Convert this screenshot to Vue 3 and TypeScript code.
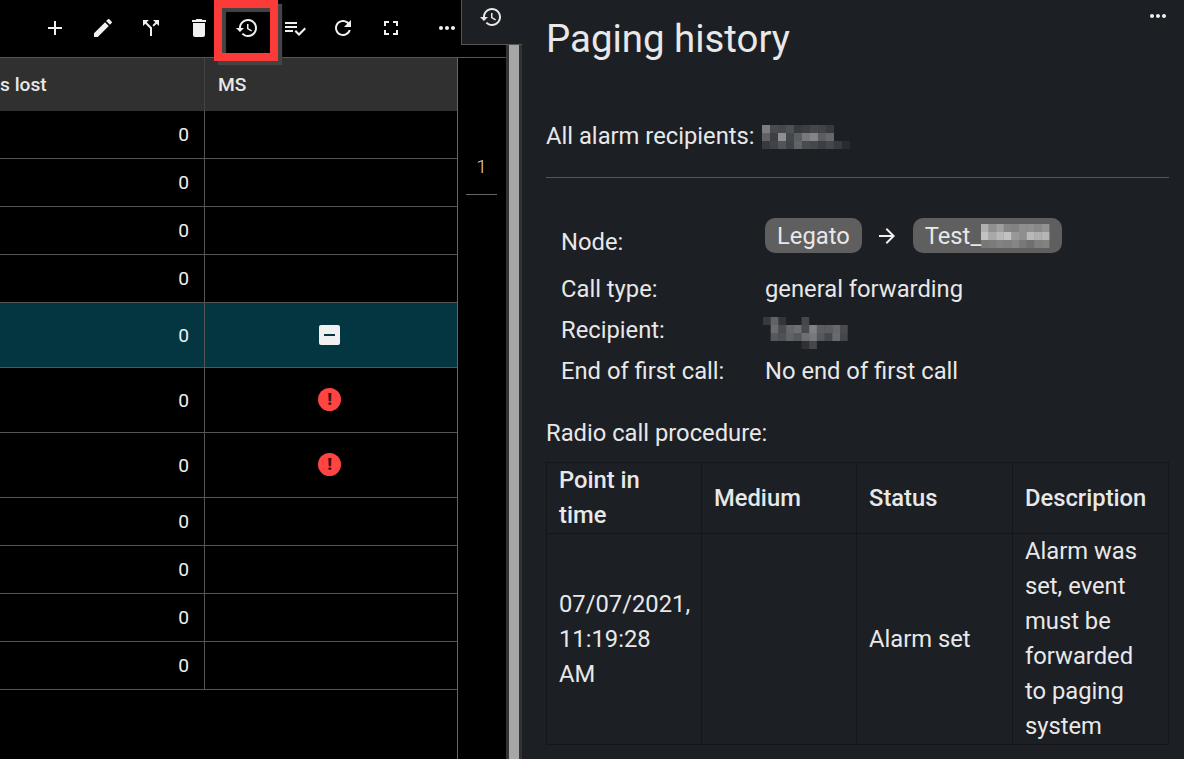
<script setup lang="ts">
const icons: Record<string, string> = {
  add: 'M19 13h-6v6h-2v-6H5v-2h6V5h2v6h6v2z',
  edit: 'M3 17.25V21h3.75L17.81 9.94l-3.75-3.75L3 17.25zM20.71 7.04c.39-.39.39-1.02 0-1.41l-2.34-2.34c-.39-.39-1.02-.39-1.41 0l-1.83 1.83 3.75 3.75 1.83-1.83z',
  split: 'M14 4l2.29 2.29-2.88 2.88 1.42 1.42 2.88-2.88L20 10V4zm-4 0H4v6l2.29-2.29 4.71 4.7V20h2v-8.41l-5.29-5.3z',
  trash: 'M6 19c0 1.1.9 2 2 2h8c1.1 0 2-.9 2-2V7H6v12zM19 4h-3.5l-1-1h-5l-1 1H5v2h14V4z',
  history: 'M13 3c-4.97 0-9 4.03-9 9H1l3.89 3.89.07.14L9 12H6c0-3.87 3.13-7 7-7s7 3.13 7 7-3.13 7-7 7c-1.93 0-3.68-.79-4.94-2.06l-1.42 1.42C8.27 19.99 10.51 21 13 21c4.97 0 9-4.03 9-9s-4.03-9-9-9zm-1 5v5l4.28 2.54.72-1.21-3.5-2.08V8H12z',
  checklist: 'M14 10H2v2h12v-2zm0-4H2v2h12V6zM2 16h8v-2H2v2zm19.5-4.5L23 13l-6.99 7-4.51-4.5L13 14l3.01 3 5.49-5.5z',
  refresh: 'M17.65 6.35C16.2 4.9 14.21 4 12 4c-4.42 0-7.99 3.58-7.99 8s3.57 8 7.99 8c3.73 0 6.84-2.55 7.73-6h-2.08c-.82 2.33-3.04 4-5.65 4-3.31 0-6-2.69-6-6s2.69-6 6-6c1.66 0 3.14.69 4.22 1.78L13 11h7V4l-2.35 2.35z',
  fullscreen: 'M7 14H5v5h5v-2H7v-3zm-2-4h2V7h3V5H5v5zm12 7h-3v2h5v-5h-2v3zM14 5v2h3v3h2V5h-5z',
  more: 'M6 10c-1.1 0-2 .9-2 2s.9 2 2 2 2-.9 2-2-.9-2-2-2zm12 0c-1.1 0-2 .9-2 2s.9 2 2 2 2-.9 2-2-.9-2-2-2zm-6 0c-1.1 0-2 .9-2 2s.9 2 2 2 2-.9 2-2-.9-2-2-2z',
  arrow: 'M12 4l-1.41 1.41L16.17 11H4v2h12.17l-5.58 5.59L12 20l8-8z',
};

const tools = ['add', 'edit', 'split', 'trash', 'history', 'checklist', 'refresh', 'fullscreen'];

const rows = [
  { h: 48 }, { h: 48 }, { h: 48 }, { h: 48 },
  { h: 65, state: 'minus' }, { h: 65, state: 'error' }, { h: 65, state: 'error' },
  { h: 48 }, { h: 48 }, { h: 48 }, { h: 48 },
];

// blurred-out names, values are white opacity per block
const blurAll = [
  [42, 20, 18, 22, 12, 14, 18, 16, 12, 0, 0],
  [30, 14, 50, 18, 28, 40, 45, 28, 32, 0, 0],
  [12, 16, 24, 16, 30, 20, 18, 14, 18, 12, 6],
];
const blurTest = [
  [50, 30, 40, 24, 22, 30, 30, 26, 32],
  [62, 46, 56, 62, 36, 30, 56, 50, 54],
  [16, 18, 22, 20, 24, 16, 10, 20, 22],
];
const blurRecipient = [
  [12, 30, 10, 0, 0, 18, 0, 0, 0, 0, 0],
  [0, 34, 20, 32, 36, 20, 44, 28, 28, 32, 20],
  [0, 26, 22, 30, 26, 36, 40, 26, 18, 34, 18],
  [0, 0, 0, 0, 0, 8, 18, 0, 0, 0, 0],
];

function flat(grid: number[][]) {
  return grid.flatMap((row, y) => row.map((v, x) => ({ x, y, o: v / 100 })));
}
</script>

<template>
  <div class="page">
    <section class="left">
      <div class="toolbar">
        <button v-for="t in tools" :key="t">
          <svg viewBox="0 0 24 24"><path :d="icons[t]" /></svg>
        </button>
        <button class="more">
          <svg viewBox="0 0 24 24"><path :d="icons.more" /></svg>
        </button>
      </div>
      <div class="highlight"></div>

      <div class="body">
        <div class="grid">
          <div class="head">
            <div class="col-a">s lost</div>
            <div class="col-b">MS</div>
          </div>
          <div
            v-for="(row, i) in rows"
            :key="i"
            class="row"
            :class="{ selected: row.state === 'minus' }"
            :style="{ height: row.h + 'px' }"
          >
            <div class="col-a num">0</div>
            <div class="col-b state">
              <span v-if="row.state === 'minus'" class="minus"><i></i></span>
              <span v-if="row.state === 'error'" class="error">!</span>
            </div>
          </div>
        </div>
        <div class="pager">
          <div class="page-no">1</div>
        </div>
      </div>

      <div class="tab">
        <svg viewBox="0 0 24 24"><path :d="icons.history" /></svg>
      </div>
    </section>

    <div class="splitter"><div class="handle"></div></div>

    <section class="panel">
      <svg class="panel-more" viewBox="0 0 24 24"><path :d="icons.more" /></svg>
      <h1>Paging history</h1>
      <div class="recipients">
        <span>All alarm recipients:</span>
        <svg class="blur blur-all" width="89" height="24">
          <rect v-for="c in flat(blurAll)" :key="`${c.x}-${c.y}`" :x="c.x * 8" :y="c.y * 8" width="8" height="8" fill="#fff" :fill-opacity="c.o" />
        </svg>
      </div>
      <hr />
      <div class="info">
        <div class="label">Node:</div>
        <div class="chips">
          <span class="chip">Legato</span>
          <svg class="arrow" viewBox="0 0 24 24"><path :d="icons.arrow" /></svg>
          <span class="chip">Test_<svg class="blur" width="69" height="24">
            <rect v-for="c in flat(blurTest)" :key="`${c.x}-${c.y}`" :x="c.x * 7.6" :y="c.y * 8" width="7.6" height="8" fill="#fff" :fill-opacity="c.o" />
          </svg></span>
        </div>
        <div class="label">Call type:</div>
        <div>general forwarding</div>
        <div class="label">Recipient:</div>
        <div class="recipient-cell">
          <svg class="blur" width="86" height="32">
            <rect v-for="c in flat(blurRecipient)" :key="`${c.x}-${c.y}`" :x="c.x * 7.7" :y="c.y * 8" width="7.7" height="8" fill="#fff" :fill-opacity="c.o" />
          </svg>
        </div>
        <div class="label">End of first call:</div>
        <div>No end of first call</div>
      </div>
      <div class="procedure">Radio call procedure:</div>
      <table>
        <colgroup>
          <col class="w155" />
          <col class="w155" />
          <col class="w156" />
          <col class="w156" />
        </colgroup>
        <thead>
          <tr>
            <th>Point in time</th>
            <th>Medium</th>
            <th>Status</th>
            <th>Description</th>
          </tr>
        </thead>
        <tbody>
          <tr>
            <td>07/07/2021, 11:19:28 AM</td>
            <td></td>
            <td>Alarm set</td>
            <td>Alarm was set, event must be forwarded to paging system</td>
          </tr>
        </tbody>
      </table>
    </section>
  </div>
</template>

<style>
html,
body {
  margin: 0;
  background: #000;
  overflow: hidden;
}
</style>

<style scoped>
.page {
  display: flex;
  width: 1184px;
  height: 759px;
  overflow: hidden;
  font-family: Roboto, "Noto Sans", sans-serif;
  color: #e8e8e8;
  background: #000;
}
.left {
  position: relative;
  width: 506px;
  flex: none;
  display: flex;
  flex-direction: column;
}
.toolbar {
  display: flex;
  align-items: center;
  flex: none;
  height: 55px;
  padding-left: 31px;
  padding-bottom: 2px;
  border-bottom: 1px solid #555;
}
.toolbar button {
  width: 48px;
  height: 48px;
  padding: 0;
  border: none;
  background: transparent;
  display: flex;
  align-items: center;
  justify-content: center;
}
.toolbar svg {
  width: 24px;
  height: 24px;
  fill: #f0f0f0;
}
.toolbar .more {
  margin-left: 8px;
}
.highlight {
  position: absolute;
  left: 214px;
  top: 0;
  width: 48px;
  height: 45px;
  border: 8px solid #fb3a3a;
  box-shadow: 4px 4px 1px #444, inset 4px 4px 1px #444;
}
.body {
  flex: 1;
  display: flex;
  min-height: 0;
}
.grid {
  width: 458px;
  flex: none;
  border-right: 1px solid #666;
  box-sizing: border-box;
}
.head {
  display: flex;
  height: 53px;
  background: #303030;
  font-size: 19.2px;
  font-weight: 500;
  color: #e8e8e8;
  line-height: 53px;
}
.head .col-a {
  border-right: 1px solid #444;
}
.head .col-b {
  padding-left: 13px;
}
.row {
  display: flex;
  box-sizing: border-box;
  border-bottom: 1px solid #555;
}
.col-a {
  width: 205px;
  flex: none;
  box-sizing: border-box;
}
.col-b {
  flex: 1;
}
.row .col-a {
  border-right: 1px solid #555;
}
.num {
  display: flex;
  align-items: center;
  justify-content: flex-end;
  padding-right: 15px;
  font-size: 19.2px;
  font-weight: 400;
  color: #f0f0f0;
}
.state {
  display: flex;
  align-items: center;
  justify-content: center;
  padding-right: 3px;
}
.selected {
  background: #033641;
}
.minus {
  width: 21px;
  height: 20px;
  border-radius: 2px;
  background: #f0f0f0;
  display: flex;
  align-items: center;
  justify-content: center;
}
.minus i {
  display: block;
  width: 11px;
  height: 2px;
  background: #033641;
}
.error {
  width: 23px;
  height: 23px;
  margin-bottom: 2px;
  border-radius: 50%;
  background: #ff4444;
  color: #3a0a0c;
  font-size: 17px;
  font-weight: 900;
  line-height: 23px;
  text-align: center;
}
.pager {
  flex: 1;
  padding: 0 9px 0 8px;
}
.page-no {
  height: 137px;
  box-sizing: border-box;
  padding-top: 98px;
  border-bottom: 1px solid #666;
  text-align: center;
  font-size: 19.2px;
  line-height: 21px;
  color: #e8d8c0;
  font-weight: 300;
}
.tab {
  position: absolute;
  left: 461px;
  top: 0;
  width: 61px;
  height: 45px;
  box-sizing: border-box;
  background: #1c1f24;
  border-left: 1px solid #555;
  border-bottom: 1px solid #555;
  padding: 5px 0 0 17px;
}
.tab svg {
  display: block;
  width: 24px;
  height: 24px;
  fill: #e8e8e8;
}
.splitter {
  width: 16px;
  flex: none;
  box-sizing: border-box;
  background: #333;
  padding: 0 3px;
}
.handle {
  height: 100%;
  background: #a6a6a6;
}
.panel {
  position: relative;
  flex: 1;
  min-width: 0;
  box-sizing: border-box;
  padding: 17px 15px 0 24px;
  background: #1c1f24;
  font-size: 23.75px;
  line-height: 35px;
}
.panel-more {
  position: absolute;
  right: 14px;
  top: 4px;
  width: 24px;
  height: 24px;
  fill: #f0f0f0;
}
h1 {
  margin: 0;
  font-size: 38.4px;
  font-weight: 400;
  line-height: 44px;
}
.recipients {
  display: flex;
  align-items: center;
  margin-top: 58px;
  height: 35px;
}
.blur {
  flex: none;
}
.blur-all {
  margin-left: 7px;
  margin-top: 1px;
}
hr {
  margin: 23px 0 0;
  border: none;
  border-top: 1px solid #555;
}
.info {
  display: grid;
  grid-template-columns: 204px 1fr;
  row-gap: 6px;
  align-items: center;
  margin-top: 40px;
  padding-left: 15px;
}
.chips {
  display: flex;
  align-items: center;
  padding-bottom: 13px;
}
.chip {
  display: inline-flex;
  align-items: center;
  box-sizing: border-box;
  height: 35px;
  padding: 1px 12px 0;
  border-radius: 10px;
  background: #5f5f5f;
}
.arrow {
  width: 24px;
  height: 24px;
  margin: 0 14px 0 13px;
  fill: #f0f0f0;
}
.recipient-cell {
  height: 35px;
  display: flex;
  align-items: center;
}
.recipient-cell .blur {
  margin-left: -2px;
  margin-top: 4px;
}
.procedure {
  margin-top: 27px;
}
table {
  width: 622px;
  margin-top: 11px;
  border-collapse: collapse;
  table-layout: fixed;
}
.w155 {
  width: 155px;
}
.w156 {
  width: 156px;
}
th,
td {
  border: 1px solid #14161a;
  padding: 0 12px;
  text-align: left;
  vertical-align: middle;
}
th {
  font-weight: 500;
}
</style>
